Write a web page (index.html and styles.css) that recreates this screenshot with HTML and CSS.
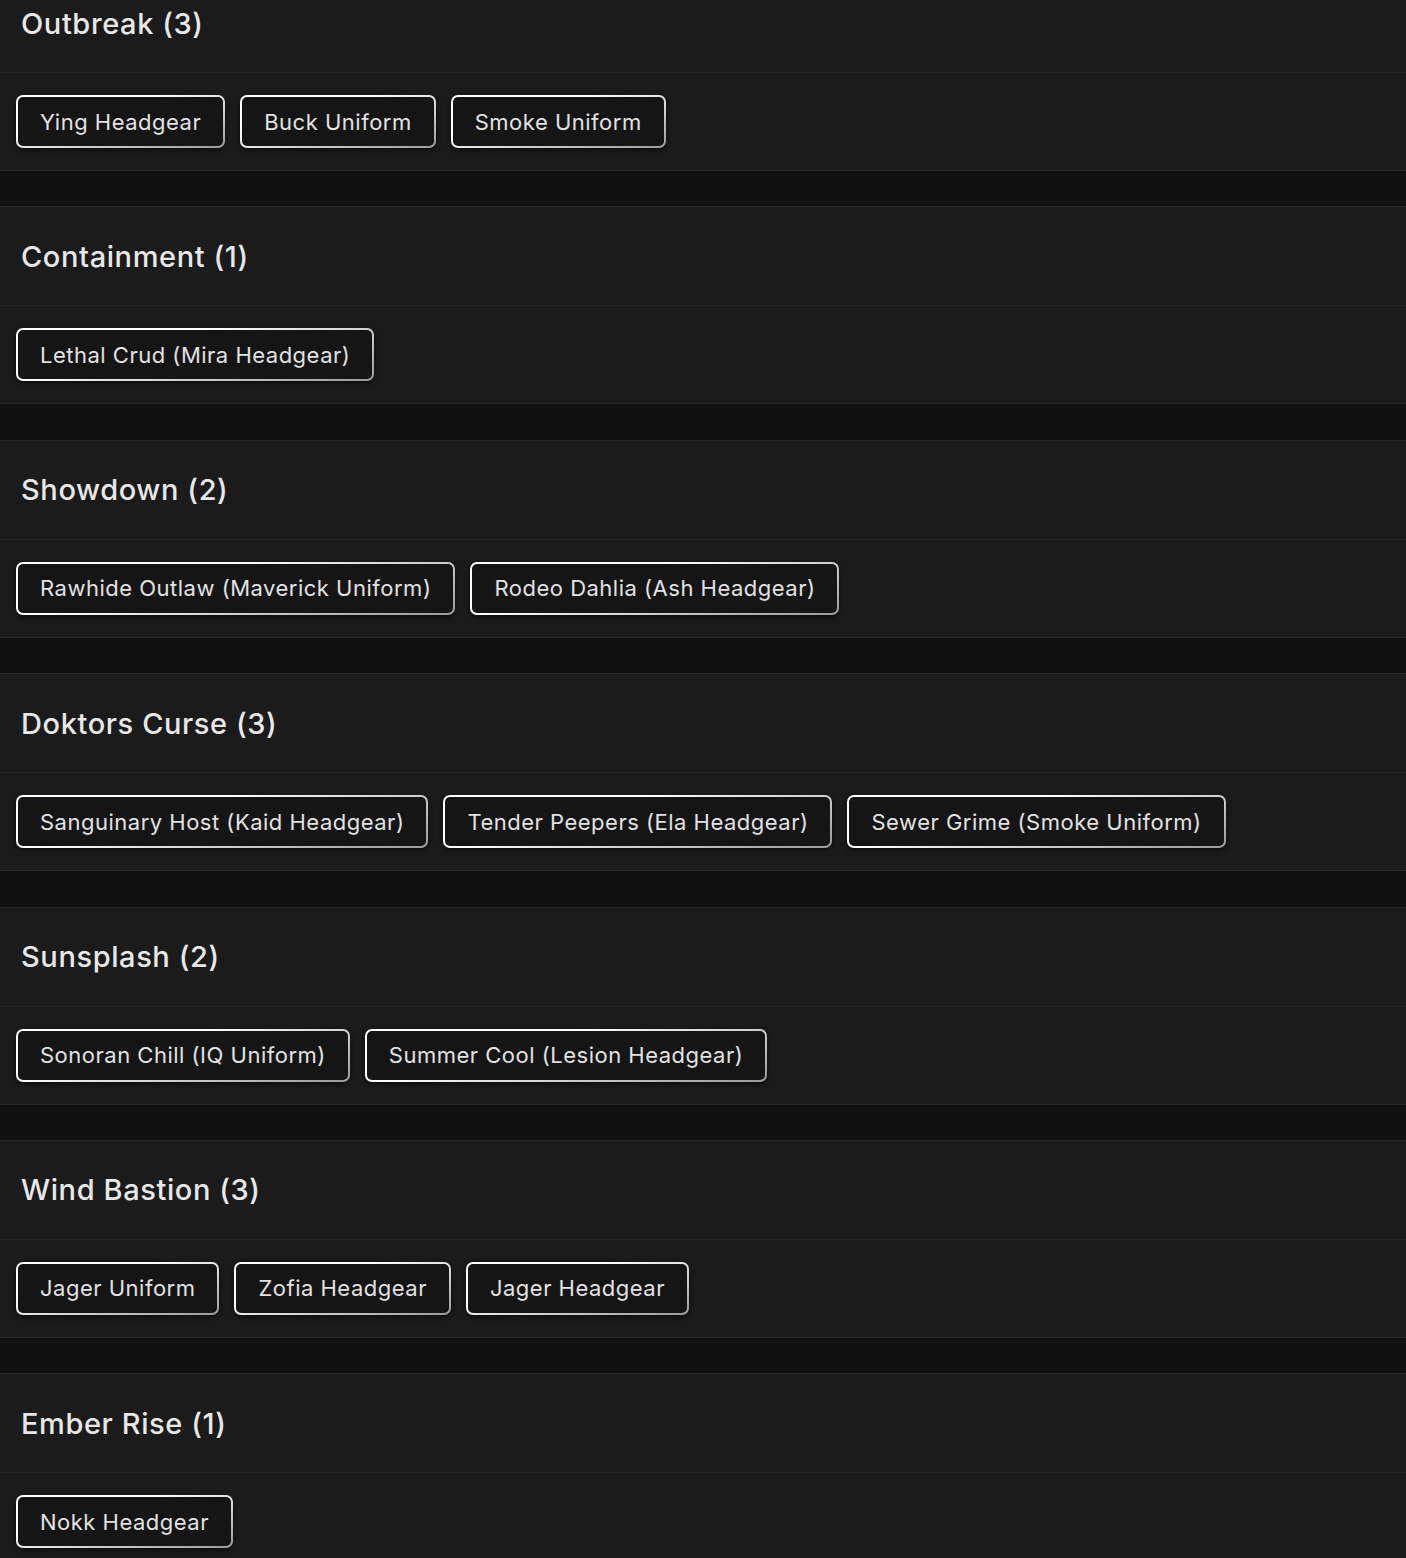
FILE: index.html
```html
<!DOCTYPE html>
<html>
<head>
<meta charset="utf-8">
<link rel="stylesheet" href="styles.css">
</head>
<body>
<div class="page">
  <section class="group">
    <h2 class="group-title">Outbreak (3)</h2>
    <div class="items">
      <span class="item">Ying Headgear</span>
      <span class="item">Buck Uniform</span>
      <span class="item">Smoke Uniform</span>
    </div>
  </section>
  <section class="group">
    <h2 class="group-title">Containment (1)</h2>
    <div class="items">
      <span class="item">Lethal Crud (Mira Headgear)</span>
    </div>
  </section>
  <section class="group">
    <h2 class="group-title">Showdown (2)</h2>
    <div class="items">
      <span class="item">Rawhide Outlaw (Maverick Uniform)</span>
      <span class="item">Rodeo Dahlia (Ash Headgear)</span>
    </div>
  </section>
  <section class="group">
    <h2 class="group-title">Doktors Curse (3)</h2>
    <div class="items">
      <span class="item">Sanguinary Host (Kaid Headgear)</span>
      <span class="item">Tender Peepers (Ela Headgear)</span>
      <span class="item">Sewer Grime (Smoke Uniform)</span>
    </div>
  </section>
  <section class="group">
    <h2 class="group-title">Sunsplash (2)</h2>
    <div class="items">
      <span class="item">Sonoran Chill (IQ Uniform)</span>
      <span class="item">Summer Cool (Lesion Headgear)</span>
    </div>
  </section>
  <section class="group">
    <h2 class="group-title">Wind Bastion (3)</h2>
    <div class="items">
      <span class="item">Jager Uniform</span>
      <span class="item">Zofia Headgear</span>
      <span class="item">Jager Headgear</span>
    </div>
  </section>
  <section class="group">
    <h2 class="group-title">Ember Rise (1)</h2>
    <div class="items">
      <span class="item">Nokk Headgear</span>
    </div>
  </section>
</div>
</body>
</html>
```

FILE: styles.css
```css
* { box-sizing: border-box; }
html, body {
  margin: 0;
  padding: 0;
  background: #111111;
  height: 100%;
  overflow: hidden;
}
body {
  font-family: Inter, "Open Sans", sans-serif;
  color: #e4e4e4;
}
.page {
  display: flex;
  flex-direction: column;
  gap: 35.4px;
  margin-top: -27px;
}
.group {
  background: #1b1b1b;
  border-top: 1px solid #262626;
  border-bottom: 1px solid #262626;
}
.group-title {
  margin: 0;
  height: 99px;
  display: flex;
  align-items: center;
  padding: 0 21px;
  font-size: 29px;
  font-weight: 500;
  letter-spacing: 0.6px;
  color: #e8e8e8;
  border-bottom: 1px solid #252525;
}
.items {
  display: flex;
  flex-wrap: wrap;
  gap: 15px;
  padding: 22px 16px;
}
.item {
  display: inline-flex;
  align-items: center;
  height: 53px;
  padding: 0 22px;
  border: 2px solid transparent;
  border-radius: 7px;
  background:
    linear-gradient(#151515, #151515) padding-box,
    linear-gradient(165deg, #ffffff 35%, #9a9a9a 100%) border-box;
  box-shadow: 0 2px 5px rgba(0, 0, 0, 0.55);
  font-size: 22px;
  font-weight: 400;
  letter-spacing: 0.5px;
  color: #e2e2e2;
  white-space: nowrap;
}
```
